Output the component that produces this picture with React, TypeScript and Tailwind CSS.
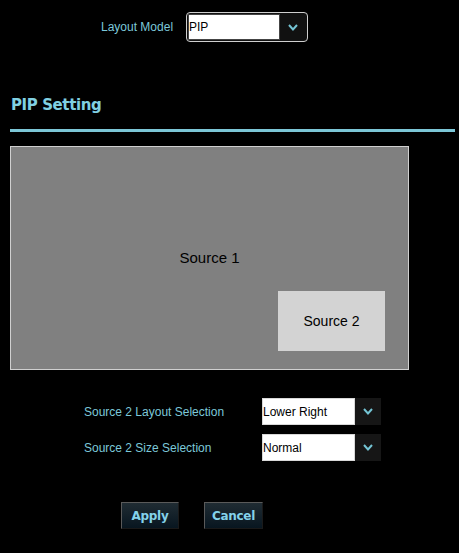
import React, { useState } from 'react';

const Chevron: React.FC = () => (
    <svg width="10" height="7" viewBox="0 0 10 7" fill="none">
        <polyline points="1,1 5,5.5 9,1" stroke="#74c4d4" strokeWidth="2" />
    </svg>
);

type DropProps = {
    value: string;
    whiteWidth: string;
};

// flat dropdown used in the form rows
const Drop: React.FC<DropProps> = ({ value, whiteWidth }) => (
    <div className="flex h-[27px]">
        <div className={`${whiteWidth} h-full bg-white border border-[#d8d8d8] flex items-center text-[12px] text-black leading-none`}>
            {value}
        </div>
        <div className="w-[26px] h-full bg-[#161616] flex items-center justify-center">
            <Chevron />
        </div>
    </div>
);

const PipSetting: React.FC = () => {
    const [layoutModel] = useState('PIP');
    const [position] = useState('Lower Right');
    const [size] = useState('Normal');

    return (
        <div className="w-[459px] h-[553px] bg-black font-['Liberation_Sans',Arial,sans-serif] flex flex-col">
            {/* Layout model */}
            <div className="flex items-center pt-[12px] pl-[101px]">
                <div className="w-[85px] text-[12px] text-[#7cc8d9]">Layout Model</div>
                <div className="w-[122px] h-[30px] border border-[#cfcfcf] rounded-[4px] bg-[#111] flex p-px">
                    <div className="w-[92px] h-full bg-white border border-[#444] flex items-center text-[12px] text-black leading-none">
                        {layoutModel}
                    </div>
                    <div className="flex-1 flex items-center justify-center">
                        <Chevron />
                    </div>
                </div>
            </div>

            <div className="mt-[54px] pl-[11px] h-[19px] leading-[19px] text-[15px] font-bold tracking-[-0.4px] text-[#80d0e2] font-['DejaVu_Sans',Verdana,sans-serif]">
                PIP Setting
            </div>
            <div className="mt-[14px] ml-[10px] w-[445px] h-[3px] bg-[#7cc6d6]" />

            {/* preview */}
            <div className="relative mt-[14px] ml-[10px] w-[399px] h-[224px] bg-[#808080] border border-[#d0d0d0] flex items-center justify-center">
                <span className="text-[15px] text-black">Source 1</span>
                <div className="absolute right-[23px] bottom-[18px] w-[107px] h-[60px] bg-[#d3d3d3] flex items-center justify-center text-[14px] text-black">
                    Source 2
                </div>
            </div>

            {/* form */}
            <div className="mt-[28px] flex flex-col gap-[9px]">
                <div className="flex items-center pl-[84px]">
                    <div className="w-[178px] text-[12px] text-[#7cc8d9]">Source 2 Layout Selection</div>
                    <Drop value={position} whiteWidth="w-[93px]" />
                </div>
                <div className="flex items-center pl-[84px]">
                    <div className="w-[178px] text-[12px] text-[#7cc8d9]">Source 2 Size Selection</div>
                    <Drop value={size} whiteWidth="w-[93px]" />
                </div>
            </div>

            <div className="mt-[41px] pl-[121px] flex gap-[25px]">
                <button className="w-[58px] h-[27px] border-t border-l border-[#5a5a5a] border-r border-b border-r-[#1a1a1a] border-b-[#1a1a1a] bg-gradient-to-b from-[#202c33] to-[#081620] text-[12px] font-bold tracking-[-0.3px] text-[#84d2ea] font-['DejaVu_Sans',Verdana,sans-serif]">
                    Apply
                </button>
                <button className="w-[59px] h-[27px] border-t border-l border-[#5a5a5a] border-r border-b border-r-[#1a1a1a] border-b-[#1a1a1a] bg-gradient-to-b from-[#202c33] to-[#081620] text-[12px] font-bold tracking-[-0.3px] text-[#84d2ea] font-['DejaVu_Sans',Verdana,sans-serif]">
                    Cancel
                </button>
            </div>
        </div>
    );
};

export default function App() {
    return <PipSetting />;
}
